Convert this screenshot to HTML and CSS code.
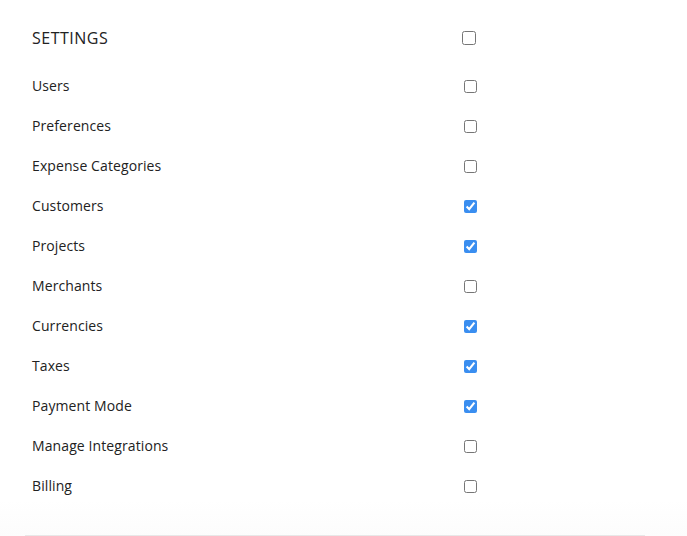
FILE: index.html
```html
<!DOCTYPE html>
<html>
<head>
<meta charset="utf-8">
<link rel="stylesheet" href="styles.css">
</head>
<body>
<div class="panel">
  <div class="header">
    <span class="title">SETTINGS</span>
    <input type="checkbox" class="check check-lg">
  </div>
  <div class="list">
    <div class="row"><span class="label">Users</span><input type="checkbox" class="check"></div>
    <div class="row"><span class="label">Preferences</span><input type="checkbox" class="check"></div>
    <div class="row"><span class="label">Expense Categories</span><input type="checkbox" class="check"></div>
    <div class="row"><span class="label">Customers</span><input type="checkbox" class="check" checked></div>
    <div class="row"><span class="label">Projects</span><input type="checkbox" class="check" checked></div>
    <div class="row"><span class="label">Merchants</span><input type="checkbox" class="check"></div>
    <div class="row"><span class="label">Currencies</span><input type="checkbox" class="check" checked></div>
    <div class="row"><span class="label">Taxes</span><input type="checkbox" class="check" checked></div>
    <div class="row"><span class="label">Payment Mode</span><input type="checkbox" class="check" checked></div>
    <div class="row"><span class="label">Manage Integrations</span><input type="checkbox" class="check"></div>
    <div class="row"><span class="label">Billing</span><input type="checkbox" class="check"></div>
  </div>
</div>
<div class="footer"><div class="footer-line"></div></div>
</body>
</html>
```

FILE: styles.css
```css
html, body {
  margin: 0;
  padding: 0;
  background: #ffffff;
}
body {
  font-family: "Open Sans", "Liberation Sans", sans-serif;
  color: #222222;
  width: 687px;
  height: 536px;
  overflow: hidden;
}
.panel {
  padding: 18px 0 0 32px;
  height: 500px;
  box-sizing: border-box;
}
.header {
  display: flex;
  align-items: center;
  height: 40px;
  margin-bottom: 8px;
}
.title {
  width: 430px;
  font-size: 16px;
  color: #222;
  letter-spacing: 0.5px;
}
.list {
  display: flex;
  flex-direction: column;
}
.row {
  display: flex;
  align-items: center;
  height: 40px;
}
.label {
  width: 432px;
  font-size: 14px;
  color: #222;
  letter-spacing: 0.1px;
  padding-bottom: 2px;
}
.check {
  margin: 0;
  width: 13px;
  height: 13px;
  accent-color: #3a8ef0;
}
.check-lg {
  width: 14px;
  height: 14px;
}
.footer {
  height: 36px;
  background: linear-gradient(#ffffff, #fcfcfc);
  display: flex;
  flex-direction: column;
  justify-content: flex-end;
  padding: 0 42px 1px 25px;
}
.footer-line {
  height: 1px;
  background: #e8e8e8;
}
```
